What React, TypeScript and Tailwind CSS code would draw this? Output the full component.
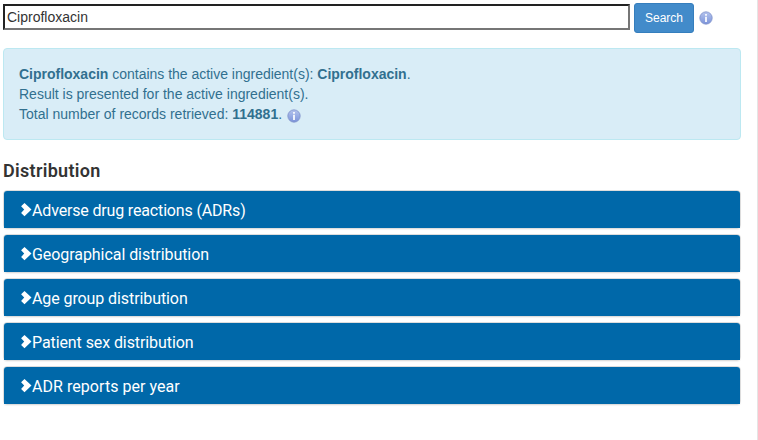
import React from "react";

const sections = [
  { title: "Adverse drug reactions (ADRs)", tracking: "tracking-[-0.16px]" },
  { title: "Geographical distribution", tracking: "tracking-[-0.06px]" },
  { title: "Age group distribution", tracking: "tracking-[-0.09px]" },
  { title: "Patient sex distribution", tracking: "tracking-[-0.09px]" },
  { title: "ADR reports per year", tracking: "tracking-[0.05px]" },
];

function InfoIcon({ id }: { id: string }) {
  return (
    <svg className="size-[14px] shrink-0" viewBox="0 0 14 14" aria-hidden="true">
      <defs>
        <linearGradient id={id} x1="0" y1="0" x2="0" y2="1">
          <stop offset="0" stopColor="#b4c2ec" />
          <stop offset="0.5" stopColor="#98ace4" />
          <stop offset="1" stopColor="#7b92d8" />
        </linearGradient>
      </defs>
      <circle cx="7" cy="7" r="6.2" fill={`url(#${id})`} stroke="#8194cc" strokeWidth="0.8" />
      <path d="M6 3h2v1.8H6zM6 5.8h2V11H6z" fill="#fff" fillOpacity="0.85" />
    </svg>
  );
}

function Chevron() {
  return (
    <svg className="h-[14px] w-[11px] shrink-0" viewBox="0 0 11 14" aria-hidden="true">
      <path d="M3.5 0 10.5 6.6 3.5 13.2.1 10 3.2 6.6.1 3.2z" fill="#fff" />
    </svg>
  );
}

export default function App() {
  return (
    <main className="h-[440px] w-[758px] overflow-hidden border-r border-[#e5e5e5] bg-white pl-[3px] pr-4 pt-[3px] font-['Liberation_Sans',Arial,sans-serif] text-[14px] leading-5">
      <form className="flex h-[30px] items-start" onSubmit={(e) => e.preventDefault()}>
        <input
          aria-label="Medicine name"
          defaultValue="Ciprofloxacin"
          className="mt-px h-[26px] w-[627px] border-2 border-b-[#767676] border-l-[#222] border-r-[#767676] border-t-[#222] bg-white px-0.5 text-[14px] text-[#333] outline-none"
        />
        <button className="ml-1 h-[30px] w-[60px] rounded-[3px] border border-[#357ebd] bg-[#428bca] text-[12px] text-white">
          Search
        </button>
        <span className="ml-[5px] mt-[7.5px]">
          <InfoIcon id="info-search" />
        </span>
      </form>

      <div className="mt-[15px] h-[92px] w-[738px] rounded border border-[#bce8f1] bg-[#d9edf7] px-[15px] pt-[15px] text-[#31708f]">
        <p className="tracking-[-0.01px]"><b>Ciprofloxacin</b> contains the active ingredient(s): <b>Ciprofloxacin</b>.</p>
        <p>Result is presented for the active ingredient(s).</p>
        <p className="flex">
          <span>Total number of records retrieved: <b>114881</b>.</span>
          <span className="ml-[5px] mt-[4.5px]"><InfoIcon id="info-total" /></span>
        </p>
      </div>

      <h2 className="mt-[21px] h-5 font-[Roboto,sans-serif] text-[18px] font-semibold leading-5 text-[#333]">
        <span className="tracking-[0.3px]">Distribution</span>
      </h2>

      <div className="mt-[9px] flex w-[738px] flex-col gap-[5px]">
        {sections.map(({ title, tracking }) => (
          <section key={title} className="h-[39px] rounded border border-[#ddd] shadow-[0_1px_1px_rgba(0,0,0,0.05)]">
            <h3 className="flex h-full items-center rounded-t-[3px] bg-[#0068a9] pl-[17px] font-[Roboto,sans-serif] text-[16px] text-white">
              <Chevron />
              <span className={`mt-0.5 ${tracking}`}>{title}</span>
            </h3>
          </section>
        ))}
      </div>
    </main>
  );
}
